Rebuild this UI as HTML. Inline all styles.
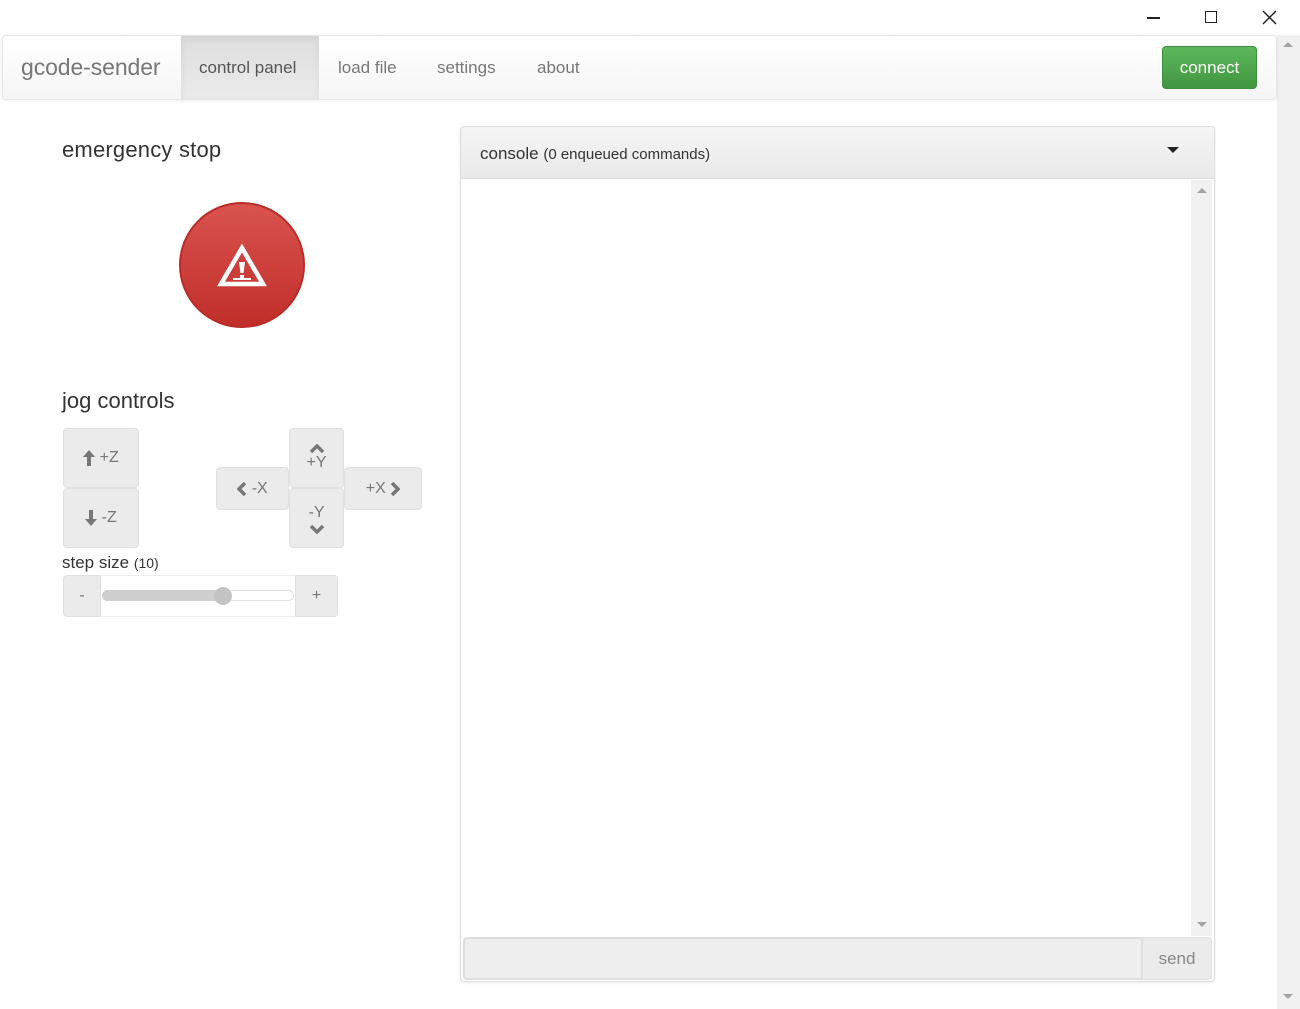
<!DOCTYPE html>
<html><head><meta charset="utf-8"><style>
*{box-sizing:border-box;margin:0;padding:0}
body{width:1300px;height:1009px;background:#fff;font-family:"Liberation Sans",sans-serif;position:relative;overflow:hidden;color:#333}
.a{position:absolute}
.btn{position:absolute;background:#ebebeb;border:1px solid #e0e0e0;border-radius:4px;color:#777;font-size:16px;display:flex;align-items:center;justify-content:center;text-align:center}
svg{display:block}
</style></head><body>
<div class="a" style="left:1147px;top:17px;width:13px;height:1.5px;background:#222"></div>
<div class="a" style="left:1205px;top:11px;width:12px;height:12px;border:1.5px solid #222"></div>
<svg class="a" style="left:1262px;top:10px" width="15" height="15"><path d="M1 1L14 14M14 1L1 14" stroke="#222" stroke-width="1.5"/></svg>
<div class="a" style="left:1277px;top:35px;width:23px;height:974px;background:#f1f1f1"></div>
<svg class="a" style="left:1283px;top:41px" width="10" height="7"><path d="M0 6L5 1L10 6Z" fill="#a3a3a3"/></svg>
<svg class="a" style="left:1283px;top:993px" width="10" height="7"><path d="M0 1L5 6L10 1Z" fill="#a3a3a3"/></svg>
<div class="a" style="left:2px;top:35px;width:1275px;height:65px;background:linear-gradient(#fff,#f6f6f6);border:1px solid #e6e6e6;border-radius:4px;box-shadow:0 1px 4px rgba(0,0,0,.07)"></div>
<div class="a" style="left:21px;top:54px;font-size:23px;color:#777;letter-spacing:-0.1px">gcode-sender</div>
<div class="a" style="left:181px;top:36px;width:138px;height:63px;background:linear-gradient(#dedede,#ebebeb);box-shadow:inset 0 3px 8px rgba(0,0,0,.06)"></div>
<div class="a" style="left:199px;top:58px;font-size:17px;color:#555">control panel</div>
<div class="a" style="left:338px;top:58px;font-size:17px;color:#777">load file</div>
<div class="a" style="left:437px;top:58px;font-size:17px;color:#777">settings</div>
<div class="a" style="left:537px;top:58px;font-size:17px;color:#777">about</div>
<div class="a" style="left:1162px;top:46px;width:95px;height:43px;background:linear-gradient(#5cb85c,#419641);border:1px solid #3e8f3e;border-radius:4px;color:#fff;font-size:17px;display:flex;align-items:center;justify-content:center">connect</div>
<div class="a" style="left:62px;top:137px;font-size:22px;color:#333;letter-spacing:0.2px">emergency stop</div>
<div class="a" style="left:179px;top:202px;width:126px;height:126px;border-radius:50%;background:linear-gradient(#d9534f,#c12e2a);border:2px solid #b92c28"></div>
<svg class="a" style="left:216px;top:243px" width="52" height="46"><path d="M26 5L47 41H5Z" fill="none" stroke="#fff" stroke-width="4.5"/><path d="M23 19H29L27.5 30H24.5Z" fill="#fff"/><rect x="24" y="32" width="4" height="4" fill="#fff"/><rect x="17" y="35" width="18" height="2" fill="#fff"/></svg>
<div class="a" style="left:62px;top:388px;font-size:22px;color:#333">jog controls</div>
<div class="btn" style="left:63px;top:428px;width:76px;height:60px"><svg width="12" height="16"><path d="M6 0L12 7H8V16H4V7H0Z" fill="#777"/></svg>&nbsp;+Z</div>
<div class="btn" style="left:63px;top:488px;width:76px;height:60px"><svg width="12" height="16"><path d="M6 16L12 9H8V0H4V9H0Z" fill="#777"/></svg>&nbsp;-Z</div>
<div class="btn" style="left:216px;top:467px;width:73px;height:43px"><svg width="10" height="14"><path d="M8 1L2 7L8 13" fill="none" stroke="#777" stroke-width="3.5"/></svg>&nbsp;-X</div>
<div class="btn" style="left:289px;top:428px;width:55px;height:60px;flex-direction:column;line-height:18px"><svg width="16" height="10"><path d="M2 8L8 2L14 8" fill="none" stroke="#777" stroke-width="3.5"/></svg>+Y</div>
<div class="btn" style="left:289px;top:488px;width:55px;height:60px;flex-direction:column;line-height:22px">-Y<svg width="16" height="10"><path d="M2 2L8 8L14 2" fill="none" stroke="#777" stroke-width="3.5"/></svg></div>
<div class="btn" style="left:344px;top:467px;width:78px;height:43px">+X&nbsp;<svg width="10" height="14"><path d="M2 1L8 7L2 13" fill="none" stroke="#777" stroke-width="3.5"/></svg></div>
<div class="a" style="left:62px;top:553px;font-size:17px;color:#333">step size <span style="font-size:14px">(10)</span></div>
<div class="btn" style="left:63px;top:575px;width:38px;height:42px;border-radius:4px 0 0 4px">-</div>
<div class="a" style="left:101px;top:575px;width:195px;height:42px;border-top:1px solid #eee;border-bottom:1px solid #eee"></div>
<div class="a" style="left:102px;top:590px;width:192px;height:11px;border:1px solid #e2e2e2;border-radius:6px;background:#fff"></div>
<div class="a" style="left:102px;top:590px;width:122px;height:11px;border-radius:6px;background:#cfcfcf"></div>
<div class="a" style="left:214px;top:587px;width:18px;height:18px;border-radius:50%;background:#c4c4c4"></div>
<div class="btn" style="left:295px;top:575px;width:43px;height:42px;border-radius:0 4px 4px 0">+</div>
<div class="a" style="left:460px;top:126px;width:755px;height:856px;border:1px solid #ddd;border-radius:4px;box-shadow:0 1px 3px rgba(0,0,0,.08)"></div>
<div class="a" style="left:461px;top:127px;width:753px;height:52px;background:linear-gradient(#f5f5f5,#e9e9e9);border-bottom:1px solid #ddd;border-radius:4px 4px 0 0"></div>
<div class="a" style="left:480px;top:144px;font-size:17px;color:#333">console <span style="font-size:15px">(0 enqueued commands)</span></div>
<svg class="a" style="left:1167px;top:147px" width="12" height="7"><path d="M0 0H12L6 6Z" fill="#222"/></svg>
<div class="a" style="left:1191px;top:180px;width:21px;height:756px;background:#f1f1f1"></div>
<svg class="a" style="left:1197px;top:187px" width="10" height="7"><path d="M0 6L5 1L10 6Z" fill="#a3a3a3"/></svg>
<svg class="a" style="left:1197px;top:921px" width="10" height="7"><path d="M0 1L5 6L10 1Z" fill="#a3a3a3"/></svg>
<div class="a" style="left:463px;top:937px;width:680px;height:43px;background:#eee;border:2px solid #ddd;border-radius:4px 0 0 4px"></div>
<div class="btn" style="left:1142px;top:937px;width:70px;height:43px;border-radius:0 4px 4px 0;font-size:17px;color:#888">send</div>
</body></html>
